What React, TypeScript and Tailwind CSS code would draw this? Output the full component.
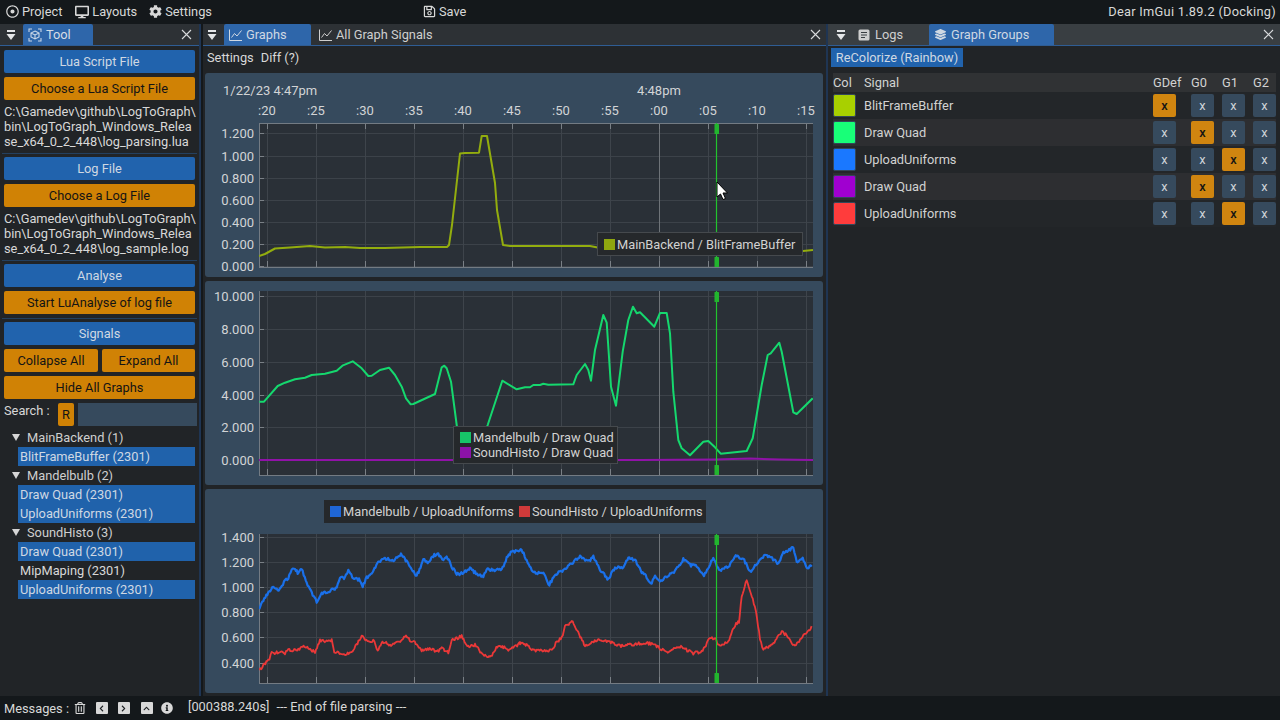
import React from 'react';
import { FaRegDotCircle, FaDesktop, FaCog, FaRegSave, FaLayerGroup, FaRegTrashAlt, FaChevronLeft, FaChevronRight, FaChevronUp, FaInfoCircle } from 'react-icons/fa';

type Pt = [number, number];

const X_TICKS = [267, 316, 365, 414, 463, 512, 561, 610, 659, 708, 757, 806];
const X_LABELS = [':20', ':25', ':30', ':35', ':40', ':45', ':50', ':55', ':00', ':05', ':10', ':15'];

const line1: Pt[] = [[259, 256], [265, 254], [275, 248.5], [290, 247.5], [310, 246], [325, 247.5], [345, 247], [360, 248], [385, 248], [420, 247], [447, 247], [449, 245], [452, 225], [460, 153.5], [465, 153], [479, 152.7], [481.7, 136], [487, 136], [495, 183], [497, 210], [503, 245], [510, 246], [590, 246], [600, 248], [640, 250], [803, 251], [813, 250]];

const line2: Pt[] = [[259.3, 401.7], [264, 401.7], [277.7, 386], [285, 382.7], [295, 379.3], [305, 377.7], [311.7, 375], [325, 373.7], [336.7, 370.7], [343, 365.3], [352.7, 361.3], [361.7, 368.3], [368.3, 376], [371.7, 375.7], [380, 370], [389, 367.7], [395, 375], [401.7, 386.7], [406, 398.3], [410.7, 404.3], [413.3, 404], [435, 394], [441.7, 367.3], [444.3, 365.7], [446.7, 368.3], [451, 381.7], [456.7, 425], [460, 450], [475, 458], [487.7, 425], [502.3, 380.7], [516.7, 389.3], [525, 387.3], [530, 387.3], [533.3, 385], [540, 385], [543.3, 383.7], [548.3, 384.7], [573.3, 384.3], [576.7, 375], [585, 364], [588.3, 370], [591, 380.7], [595, 350], [603.3, 315], [606.7, 322.7], [611, 386.7], [616, 405.7], [622.7, 351.7], [628.3, 320], [633, 306.7], [636.7, 313.3], [640, 312.3], [654.3, 326.7], [660, 313], [666.7, 313], [670, 333.3], [673.3, 391.7], [678.3, 440], [681.7, 448.3], [690, 455.3], [703.3, 441.7], [708.3, 441], [715, 447.3], [720.7, 453.7], [746.7, 451], [752.7, 438.3], [761.7, 385], [767.7, 355], [770.7, 353.3], [779.3, 342.7], [781.7, 351.7], [793.3, 412.3], [796.7, 414], [812.7, 398.3]];

const blueA: Pt[] = [[163, 355], [175, 330], [190, 308], [205, 292], [215, 300], [228, 295], [240, 270], [250, 265], [260, 238], [270, 235], [278, 250], [290, 238], [305, 280], [320, 310], [335, 335], [350, 310], [375, 302], [395, 295], [405, 265], [420, 262], [430, 240], [445, 265], [465, 270], [473, 288], [485, 262], [500, 250], [520, 215], [540, 205], [565, 213], [588, 192], [605, 215], [620, 235], [635, 258], [655, 210], [668, 218], [685, 197], [700, 193], [712, 208], [725, 200], [740, 230], [755, 252], [775, 250], [795, 233], [810, 248], [835, 262], [845, 238], [890, 240], [905, 205], [920, 185], [950, 180]];
const blueB: Pt[] = [[5, 178], [20, 210], [35, 240], [50, 250], [70, 245], [85, 287], [110, 250], [130, 240], [150, 225], [180, 198], [205, 215], [220, 200], [240, 240], [265, 268], [285, 233], [310, 232], [325, 205], [345, 210], [365, 245], [395, 280], [405, 258], [420, 272], [465, 245], [490, 208], [510, 225], [530, 228], [552, 255], [580, 205], [597, 240], [625, 230], [647, 198], [670, 205], [690, 245], [720, 210], [735, 195], [750, 200], [775, 220], [790, 190], [820, 172], [830, 215], [848, 202], [860, 232], [878, 228]];
const redA: Pt[] = [[163, 543], [175, 525], [190, 512], [200, 490], [215, 487], [240, 490], [250, 480], [280, 480], [290, 470], [310, 475], [330, 487], [345, 450], [365, 455], [380, 450], [388, 485], [410, 490], [425, 492], [445, 480], [470, 437], [490, 455], [505, 450], [518, 480], [535, 455], [555, 465], [580, 458], [600, 437], [620, 455], [635, 460], [650, 482], [680, 477], [695, 487], [710, 475], [730, 487], [740, 452], [770, 438], [790, 470], [810, 465], [835, 495], [855, 503], [880, 465], [910, 478], [925, 475], [945, 458]];
const redB: Pt[] = [[0, 460], [20, 465], [35, 480], [95, 482], [110, 455], [125, 445], [135, 410], [158, 392], [175, 430], [195, 468], [230, 450], [260, 452], [300, 468], [380, 458], [410, 468], [440, 488], [480, 470], [520, 490], [545, 485], [570, 445], [585, 445], [600, 470], [625, 455], [645, 405], [657, 395], [665, 320], [680, 268], [695, 320], [708, 360], [720, 450], [730, 480], [760, 460], [785, 425], [800, 435], [825, 470], [850, 435], [878, 408]];

// zoom crops were 3x, so bring the traced points back to page coords
const fromCrops = (a: Pt[], b: Pt[]): Pt[] => [
  ...a.map(([x, y]): Pt => [205 + x / 3, 490 + y / 3]),
  ...b.map(([x, y]): Pt => [520 + x / 3, 490 + y / 3]),
];

const noisy = (pts: Pt[], amp: number, seed: number): Pt[] => {
  let s = seed;
  const out: Pt[] = [];
  for (let i = 0; i < pts.length - 1; i++) {
    const [x0, y0] = pts[i];
    const [x1, y1] = pts[i + 1];
    const n = Math.max(1, Math.round(x1 - x0));
    for (let j = 0; j < n; j++) {
      s = (s * 16807) % 2147483647;
      const t = j / n;
      out.push([x0 + (x1 - x0) * t, y0 + (y1 - y0) * t + ((s % 1000) / 1000 - 0.5) * amp]);
    }
  }
  return out;
};

const toStr = (pts: Pt[]) => pts.map(([x, y]) => `${x.toFixed(1)},${y.toFixed(1)}`).join(' ');

const purple: Pt[] = [[259, 460], [640, 460], [715, 459.5], [750, 458.5], [780, 459.5], [813, 460]];

interface PlotProps {
  top: number;
  plotTop: number;
  plotBottom: number;
  yTicks: [string, number][];
  topAxis?: boolean;
  clipId: string;
  children: React.ReactNode;
  overlay?: React.ReactNode;
}

const PANEL_X = 205;

const Plot: React.FC<PlotProps> = ({ top, plotTop, plotBottom, yTicks, topAxis, clipId, children, overlay }) => (
  <div className="relative h-[204px] w-[618px] rounded-[3px] bg-[#364a5d]">
    <svg width={618} height={204} viewBox={`${PANEL_X} ${top} 618 204`} className="block">
      <defs>
        <clipPath id={clipId}>
          <rect x={259} y={plotTop} width={554} height={plotBottom - plotTop} />
        </clipPath>
      </defs>
      <rect x={259} y={plotTop} width={554} height={plotBottom - plotTop} fill="#2a3037" />
      {yTicks.map(([label, y]) => (
        <g key={label}>
          <line x1={259} x2={813} y1={y + 0.5} y2={y + 0.5} stroke="#3c4249" />
          <line x1={259} x2={264} y1={y + 0.5} y2={y + 0.5} stroke="#7a8086" />
          <text x={254} y={y + 5} textAnchor="end" fontSize={13} fill="#d2d4d6">{label}</text>
        </g>
      ))}
      {X_TICKS.map((x, i) => (
        <g key={x}>
          <line x1={x + 0.5} x2={x + 0.5} y1={plotTop} y2={plotBottom} stroke={x === 659 ? '#6e7378' : '#3e444b'} />
          <line x1={x + 0.5} x2={x + 0.5} y1={plotBottom - 6} y2={plotBottom} stroke="#7a8086" />
          {topAxis && (
            <>
              <line x1={x + 0.5} x2={x + 0.5} y1={plotTop} y2={plotTop + 6} stroke="#7a8086" />
              <text x={x} y={115} textAnchor="middle" fontSize={13} fill="#d2d4d6">{X_LABELS[i]}</text>
            </>
          )}
        </g>
      ))}
      <line x1={259.5} x2={259.5} y1={plotTop} y2={plotBottom} stroke="#737b83" />
      <line x1={259} x2={813} y1={plotBottom + 0.5} y2={plotBottom + 0.5} stroke="#737b83" />
      {topAxis && <line x1={259} x2={813} y1={plotTop + 0.5} y2={plotTop + 0.5} stroke="#737b83" />}
      {topAxis && (
        <>
          <text x={223} y={95} fontSize={13} fill="#d2d4d6">1/22/23 4:47pm</text>
          <text x={659} y={95} textAnchor="middle" fontSize={13} fill="#d2d4d6">4:48pm</text>
        </>
      )}
      <g clipPath={`url(#${clipId})`}>{children}</g>
      <line x1={716.5} x2={716.5} y1={plotTop} y2={plotBottom} stroke="#22c42e" strokeWidth={1.2} />
      <rect x={714.5} y={plotTop + 1} width={4.5} height={10} fill="#22b52e" rx={0.5} />
      <rect x={714.5} y={plotBottom - 10} width={4.5} height={10} fill="#22b52e" rx={0.5} />
    </svg>
    {overlay}
  </div>
);

const LegendRow: React.FC<{ color: string; label: string }> = ({ color, label }) => (
  <div className="flex h-[15px] items-center gap-[2px] whitespace-nowrap">
    <span className="h-[11px] w-[11px] shrink-0" style={{ backgroundColor: color }} />
    <span>{label}</span>
  </div>
);

const CollapseArrow = () => (
  <svg width={10} height={12} viewBox="0 0 10 12" className="shrink-0">
    <rect x={1} y={1} width={8} height={2} fill="#e4e6e8" />
    <path d="M0.5 5 H9.5 L5 11 Z" fill="#e4e6e8" />
  </svg>
);

const CloseX = () => (
  <svg width={11} height={11} viewBox="0 0 11 11" className="shrink-0">
    <path d="M1 1 L10 10 M10 1 L1 10" stroke="#d8dadc" strokeWidth={1.1} />
  </svg>
);

const ToolIcon = () => (
  <svg width={14} height={14} viewBox="0 0 14 14" fill="none" stroke="#c9d6e6" strokeWidth={1.1} className="shrink-0">
    <path d="M1 4 V1 H4 M10 1 H13 V4 M13 10 V13 H10 M4 13 H1 V10" />
    <path d="M7 3 L11 5 V9 L7 11 L3 9 V5 Z M3 5 L7 7 L11 5 M7 7 V11" />
  </svg>
);

const LineChartIcon = () => (
  <svg width={13} height={12} viewBox="0 0 13 12" fill="none" stroke="currentColor" strokeWidth={1} className="shrink-0">
    <path d="M0.5 0.5 V11.5 H13" />
    <path d="M2.5 8.5 L5.5 4.5 L8 7 L12.5 1.5" />
  </svg>
);

const LogsIcon = () => (
  <svg width={12} height={12} viewBox="0 0 12 12" className="shrink-0">
    <rect x={0.5} y={0.5} width={11} height={11} rx={1.5} fill="currentColor" />
    <path d="M3 3.5 H9 M3 6 H9 M3 8.5 H7" stroke="#393e42" strokeWidth={1} />
  </svg>
);

const SolidButton: React.FC<{ kind: 'blue' | 'orange'; label: string; className?: string }> = ({ kind, label, className }) => (
  <div className={`flex h-[23px] items-center justify-center rounded-[2px] ${kind === 'blue' ? 'bg-[#2163ad] text-[#cfd8e3]' : 'bg-[#d08205] text-[#141414]'} ${className ?? ''}`}>
    {label}
  </div>
);

const Sep = () => <div className="mt-[4px] mb-[3px] -mx-[2px] h-px bg-[#24405f]" />;

const PathText: React.FC<{ lines: string[] }> = ({ lines }) => (
  <div className="mt-[4px] whitespace-nowrap leading-[15px] text-[#d8d8d8]">
    {lines.map((l) => <div key={l}>{l}</div>)}
  </div>
);

const TreeHead: React.FC<{ label: string }> = ({ label }) => (
  <div className="flex h-[19px] items-center pl-[12px] text-[#cfcfcf]">
    <svg width={8} height={7} viewBox="0 0 8 7"><path d="M0 0 H8 L4 7 Z" fill="#d6d6d6" /></svg>
    <span className="ml-[7px]">{label}</span>
  </div>
);

const TreeRow: React.FC<{ label: string; on?: boolean }> = ({ label, on = true }) => (
  <div className={`ml-[18px] mr-[4px] flex h-[19px] items-center pl-[2px] ${on ? 'bg-[#2062ab] text-[#cfd8e3]' : 'text-[#d8d8d8]'}`}>{label}</div>
);

const ToolPanel = () => (
  <div className="flex w-[199px] shrink-0 flex-col">
    <div className="flex h-[22px] items-center border-b border-[#2f5d94] bg-[#2d3135]">
      <div className="ml-[6px] mr-[7px]"><CollapseArrow /></div>
      <div className="flex h-full w-[70px] items-center gap-[4px] rounded-t-[2px] bg-[#2e66aa] pl-[5px] text-[#d6dde6]">
        <ToolIcon />
        <span>Tool</span>
      </div>
      <div className="ml-auto mr-[7px]"><CloseX /></div>
    </div>
    <div className="px-[4px] pt-[4px]">
      <SolidButton kind="blue" label="Lua Script File" />
      <SolidButton kind="orange" label="Choose a Lua Script File" className="mt-[4px]" />
      <PathText lines={['C:\\Gamedev\\github\\LogToGraph\\', 'bin\\LogToGraph_Windows_Relea', 'se_x64_0_2_448\\log_parsing.lua']} />
      <Sep />
      <SolidButton kind="blue" label="Log File" />
      <SolidButton kind="orange" label="Choose a Log File" className="mt-[4px]" />
      <PathText lines={['C:\\Gamedev\\github\\LogToGraph\\', 'bin\\LogToGraph_Windows_Relea', 'se_x64_0_2_448\\log_sample.log']} />
      <Sep />
      <SolidButton kind="blue" label="Analyse" />
      <SolidButton kind="orange" label="Start LuAnalyse of log file" className="mt-[4px]" />
      <Sep />
      <SolidButton kind="blue" label="Signals" />
      <div className="mt-[4px] flex gap-[4px]">
        <SolidButton kind="orange" label="Collapse All" className="w-[94px]" />
        <SolidButton kind="orange" label="Expand All" className="w-[93px]" />
      </div>
      <SolidButton kind="orange" label="Hide All Graphs" className="mt-[4px]" />
      <div className="mt-[4px] flex h-[23px] items-start text-[#d8d8d8]">
        <span className="w-[54px] shrink-0 whitespace-nowrap leading-[15px]">Search :</span>
        <div className="flex h-[23px] w-[16px] shrink-0 items-center justify-center rounded-[2px] bg-[#d08205] text-[#141414]">R</div>
        <div className="ml-[4px] h-[23px] w-[119px] shrink-0 bg-[#364a5d]" />
      </div>
    </div>
    <div className="mt-[2px]">
      <TreeHead label="MainBackend (1)" />
      <TreeRow label="BlitFrameBuffer (2301)" />
      <TreeHead label="Mandelbulb (2)" />
      <TreeRow label="Draw Quad (2301)" />
      <TreeRow label="UploadUniforms (2301)" />
      <TreeHead label="SoundHisto (3)" />
      <TreeRow label="Draw Quad (2301)" />
      <TreeRow label="MipMaping (2301)" on={false} />
      <TreeRow label="UploadUniforms (2301)" />
    </div>
  </div>
);

const GraphsPanel = () => (
  <div className="flex w-[623px] shrink-0 flex-col">
    <div className="flex h-[22px] items-center border-b border-[#2f5d94] bg-[#2d3135]">
      <div className="ml-[4px] mr-[7px]"><CollapseArrow /></div>
      <div className="flex h-full w-[87px] items-center gap-[4px] rounded-t-[2px] bg-[#2e66aa] pl-[5px] text-[#cfd8e3]">
        <LineChartIcon />
        <span>Graphs</span>
      </div>
      <div className="flex h-full items-center gap-[4px] pl-[8px] text-[#cfcfcf]">
        <LineChartIcon />
        <span>All Graph Signals</span>
      </div>
      <div className="ml-auto mr-[5px]"><CloseX /></div>
    </div>
    <div className="flex h-[27px] items-center gap-[7px] pb-[5px] pl-[4px] text-[#d8d8d8]">
      <span>Settings</span>
      <span>Diff (?)</span>
    </div>
    <div className="flex flex-col gap-[4px] pl-[2px]">
      <Plot
        top={73}
        plotTop={123}
        plotBottom={267}
        topAxis
        clipId="p1"
        yTicks={[['1.200', 133], ['1.000', 156], ['0.800', 178], ['0.600', 200], ['0.400', 222], ['0.200', 244], ['0.000', 266]]}
        overlay={
          <div className="absolute left-[392px] top-[159px] flex h-[24px] w-[206px] items-center border border-[#45494d] bg-[#25282b] px-[6px] text-[#d2d2d2]">
            <LegendRow color="#8ea60f" label="MainBackend / BlitFrameBuffer" />
          </div>
        }
      >
        <polyline points={toStr(line1)} fill="none" stroke="#93ad0e" strokeWidth={2} strokeLinejoin="round" />
      </Plot>
      <Plot
        top={281}
        plotTop={291}
        plotBottom={475}
        clipId="p2"
        yTicks={[['10.000', 296], ['8.000', 329], ['6.000', 362], ['4.000', 395], ['2.000', 427], ['0.000', 460]]}
        overlay={
          <div className="absolute left-[248px] top-[145px] flex w-[165px] flex-col justify-center border border-[#45494d] bg-[#25282b] py-[3px] pl-[6px] text-[#d2d2d2]">
            <LegendRow color="#17c468" label="Mandelbulb / Draw Quad" />
            <LegendRow color="#8c12a8" label="SoundHisto / Draw Quad" />
          </div>
        }
      >
        <polyline points={toStr(line2)} fill="none" stroke="#15d86e" strokeWidth={2} strokeLinejoin="round" />
        <polyline points={toStr(purple)} fill="none" stroke="#9012a8" strokeWidth={2} />
      </Plot>
      <Plot
        top={489}
        plotTop={534}
        plotBottom={683}
        clipId="p3"
        yTicks={[['1.400', 537], ['1.200', 562], ['1.000', 587], ['0.800', 612], ['0.600', 637], ['0.400', 663]]}
        overlay={
          <div className="absolute left-[119px] top-[11px] flex h-[23px] w-[382px] items-center gap-[5px] bg-[#25282b] pl-[6px] text-[#d2d2d2]">
            <LegendRow color="#1f66d6" label="Mandelbulb / UploadUniforms" />
            <LegendRow color="#d03a3a" label="SoundHisto / UploadUniforms" />
          </div>
        }
      >
        <polyline points={toStr(noisy(fromCrops(blueA, blueB), 3, 4711))} fill="none" stroke="#1a70ea" strokeWidth={2.2} strokeLinejoin="round" />
        <polyline points={toStr(noisy(fromCrops(redA, redB), 3, 9973))} fill="none" stroke="#ea3838" strokeWidth={1.8} strokeLinejoin="round" />
      </Plot>
    </div>
  </div>
);

const GROUP_ROWS = [
  { color: '#a8d000', name: 'BlitFrameBuffer', on: 0 },
  { color: '#18ff78', name: 'Draw Quad', on: 1 },
  { color: '#1a78ff', name: 'UploadUniforms', on: 2 },
  { color: '#a000d0', name: 'Draw Quad', on: 1 },
  { color: '#ff3c3c', name: 'UploadUniforms', on: 2 },
];

const XButton: React.FC<{ on: boolean }> = ({ on }) => (
  <div className={`flex h-[23px] w-[23px] items-center justify-center rounded-[2px] pb-[1px] ${on ? 'bg-[#d08510] font-medium text-[#141414]' : 'bg-[#364a5d] text-[#cfd4d8]'}`}>x</div>
);

const GroupsPanel = () => (
  <div className="flex min-w-0 flex-1 flex-col">
    <div className="flex h-[22px] items-center border-b border-[#2f5d94] bg-[#393e42]">
      <div className="ml-[8px] mr-[6px]"><CollapseArrow /></div>
      <div className="flex h-full w-[77px] items-center gap-[5px] pl-[6px] text-[#cfcfcf]">
        <LogsIcon />
        <span>Logs</span>
      </div>
      <div className="flex h-full w-[125px] items-center gap-[5px] rounded-t-[2px] bg-[#2e66aa] pl-[6px] text-[#cfd8e3]">
        <FaLayerGroup size={11} />
        <span>Graph Groups</span>
      </div>
      <div className="ml-auto mr-[6px]"><CloseX /></div>
    </div>
    <div className="px-[3px] pt-[2px]">
      <div className="flex h-[19px] w-[132px] items-center justify-center bg-[#2163ad] text-[#cfd8e3]">ReColorize (Rainbow)</div>
    </div>
    <div className="ml-[5px] mt-[6px] w-[443px]">
      <div className="grid h-[19px] grid-cols-[31px_289px_38px_31px_31px_23px] items-center bg-[#303234] text-[#d2d2d2]">
        <span>Col</span>
        <span>Signal</span>
        <span>GDef</span>
        <span>G0</span>
        <span>G1</span>
        <span>G2</span>
      </div>
      {GROUP_ROWS.map((r, i) => (
        <div key={i} className={`grid h-[27px] grid-cols-[31px_289px_38px_31px_31px_23px] items-center ${i % 2 ? 'bg-[#2d2e31]' : 'bg-[#232629]'}`}>
          <div className="h-[23px] w-[23px] rounded-[2px] border border-[#33475a]" style={{ backgroundColor: r.color }} />
          <span className="text-[#d2d2d2]">{r.name}</span>
          {[0, 1, 2, 3].map((g) => <XButton key={g} on={r.on === g} />)}
        </div>
      ))}
    </div>
  </div>
);

const SmallSquare: React.FC<{ children: React.ReactNode }> = ({ children }) => (
  <span className="flex h-[12px] w-[12px] items-center justify-center rounded-[1px] bg-[#d8d8d8] text-[#1a1d20]">{children}</span>
);

export default function App() {
  return (
    <div className="relative flex h-[720px] w-[1280px] flex-col overflow-hidden bg-[#212427] font-['Roboto',sans-serif] text-[12.8px] leading-[15px] text-[#d8d8d8]">
      <div className="flex h-[24px] shrink-0 items-center bg-[#14181b] pb-[1px]">
        <div className="flex items-center gap-[3px] pl-[6px]"><FaRegDotCircle size={13} /><span>Project</span></div>
        <div className="ml-[13px] flex items-center gap-[3px]"><FaDesktop size={14} /><span>Layouts</span></div>
        <div className="ml-[12px] flex items-center gap-[3px]"><FaCog size={13} /><span>Settings</span></div>
        <div className="ml-[211px] flex items-center gap-[3px]"><FaRegSave size={13} /><span>Save</span></div>
        <span className="ml-auto pr-[4px] tracking-[0.28px]">Dear ImGui 1.89.2 (Docking)</span>
      </div>
      <div className="flex min-h-0 flex-1">
        <ToolPanel />
        <div className="flex w-[4px] shrink-0 bg-[#14181b]"><div className="h-full w-[2px] bg-[#1f3553]" /></div>
        <GraphsPanel />
        <div className="flex w-[2px] shrink-0 bg-[#1f3553]" />
        <GroupsPanel />
      </div>
      <div className="flex h-[24px] shrink-0 items-center bg-[#14181b]">
        <span className="pl-[4px] pt-[1px]">Messages :</span>
        <span className="ml-[5px]"><FaRegTrashAlt size={12} /></span>
        <span className="ml-[10px]"><SmallSquare><FaChevronLeft size={7} /></SmallSquare></span>
        <span className="ml-[10px]"><SmallSquare><FaChevronRight size={7} /></SmallSquare></span>
        <span className="ml-[11px]"><SmallSquare><FaChevronUp size={7} /></SmallSquare></span>
        <span className="ml-[8px]"><FaInfoCircle size={12} /></span>
        <span className="ml-[15px] pb-[3px]">[000388.240s]</span>
        <span className="ml-[7px] pb-[3px]">--- End of file parsing ---</span>
      </div>
      <svg width={13} height={20} viewBox="0 0 13 20" className="absolute left-[716px] top-[181px]">
        <path d="M1 1 V16 L4.5 13 L7 18.5 L9.5 17.5 L7 12 H11.5 Z" fill="#fff" stroke="#000" strokeWidth={1} />
      </svg>
    </div>
  );
}
